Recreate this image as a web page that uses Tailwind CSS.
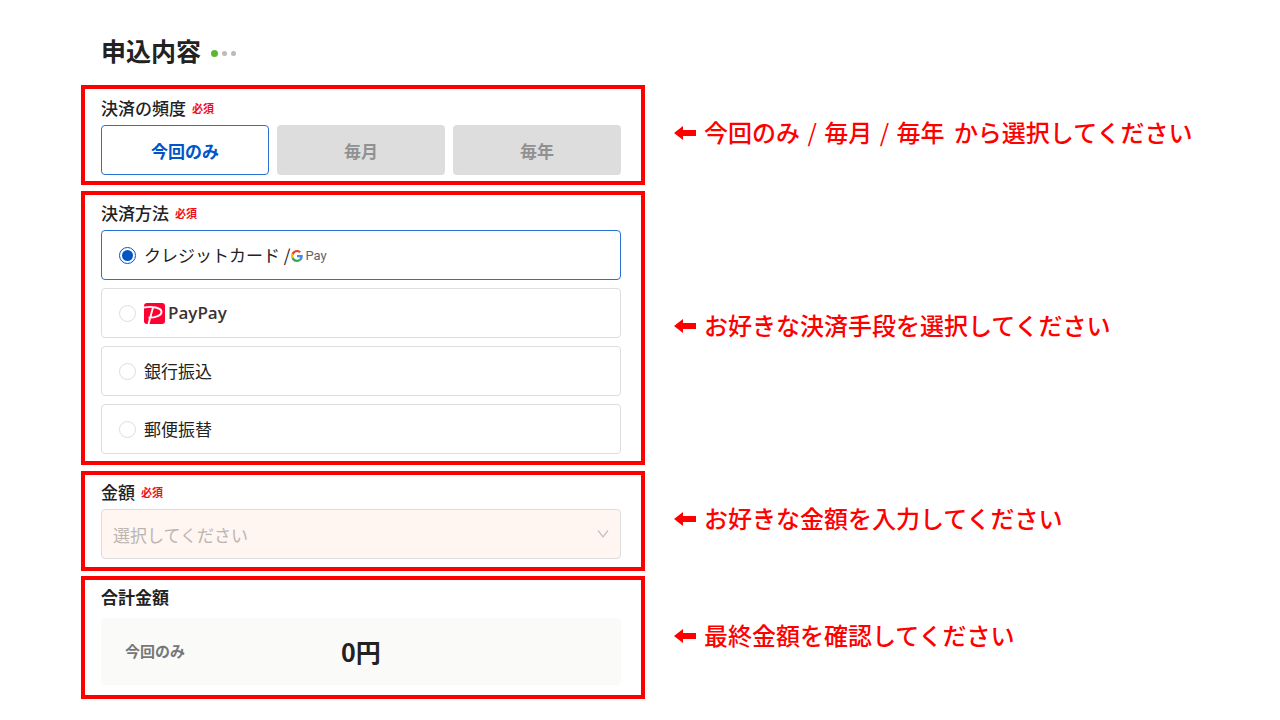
<!DOCTYPE html>
<html lang="ja">
<head>
    <meta charset="UTF-8">
    <meta name="viewport" content="width=device-width, initial-scale=1.0">
    <title>申込内容</title>
    <script src="https://cdn.jsdelivr.net/npm/@tailwindcss/browser@4"></script>
</head>
<body class="bg-white text-[#222] text-[17px] font-['Noto_Sans_CJK_JP',sans-serif]">
    <main class="pl-[81px] pt-[30px]">
        <header class="flex items-center gap-2.5 pl-5 mb-[15px]">
            <h1 class="text-[25px] leading-10 font-bold">申込内容</h1>
            <div class="flex items-center gap-1 pt-1.5">
                <span class="size-[7px] rounded-full bg-[#5cb531]"></span>
                <span class="size-[5px] rounded-full bg-[#bbb]"></span>
                <span class="size-[5px] rounded-full bg-[#bbb]"></span>
            </div>
        </header>

        <form>
            <!-- 決済の頻度 -->
            <div class="grid grid-cols-[564fr_606fr] gap-[29px] items-center">
                <section class="border-4 border-[#f00] pt-0.5 pb-1.5 pl-4 pr-5">
                    <h2 class="flex items-center gap-1.5 leading-[34px] font-medium">決済の頻度 <span class="text-[11px] font-bold text-[#f01020]">必須</span></h2>
                    <div class="grid grid-cols-3 gap-2">
                        <button type="button" class="h-[50px] pt-0.5 rounded-sm border border-[#2a70d0] bg-white text-[#0055c8] font-bold">今回のみ</button>
                        <button type="button" class="h-[50px] pt-0.5 rounded-sm bg-[#ddd] text-[#919191] font-bold">毎月</button>
                        <button type="button" class="h-[50px] pt-0.5 rounded-sm bg-[#ddd] text-[#919191] font-bold">毎年</button>
                    </div>
                </section>
                <p class="flex items-center gap-2 pb-1 text-2xl font-medium text-[#f00]">
                    <svg class="w-[22px] h-[14px] shrink-0" viewBox="0 0 22 14" fill="currentColor"><path d="M0 7 9 0v4h13v6H9v4z"/></svg>
                    <span class="pb-0.5">今回のみ <span class="mx-0.5 font-normal">/</span> 毎月 <span class="mx-0.5 font-normal">/</span> 毎年 <span class="ml-1">から選択してください</span></span>
                </p>
            </div>

            <!-- 決済方法 -->
            <div class="grid grid-cols-[564fr_606fr] gap-[29px] items-center mt-1.5">
                <section class="border-4 border-[#f00] pt-px pb-[7px] pl-4 pr-5">
                    <h2 class="flex items-center gap-1.5 leading-[34px] font-medium">決済方法 <span class="text-[11px] font-bold text-[#f01020]">必須</span></h2>
                    <div class="grid gap-2">
                        <label class="flex items-center gap-2 h-[50px] px-[17px] rounded-sm border border-[#2a70d0]">
                            <input type="radio" name="method" checked class="appearance-none size-[17px] p-[2px] rounded-full border border-[#ddd] bg-clip-content checked:border-[#0055c8] checked:bg-[#0055c8]">
                            <span class="flex items-center gap-px">クレジットカード /
                                <svg class="size-3 mt-0.5" viewBox="0 0 48 48">
                                    <path fill="#EA4335" d="M24 8c3.500 0 6.700 1.200 9.200 3.600l6.900-5.400C35.900 2.400 30.500 0 24 0 14.600 0 6.500 5.400 2.600 13.200l8 7.200C12.400 13.700 17.700 8 24 8z"/>
                                    <path fill="#4285F4" d="M47 24.600c0-1.600-.2-3.100-.4-4.600H24v9h12.900c-.6 3-2.300 5.500-4.800 7.200l7.700 6C44.400 38 47 31.800 47 24.600z"/>
                                    <path fill="#FBBC05" d="M10.500 28.600A14.500 14.500 0 0 1 10.500 19.400l-8-6.200a24 24 0 0 0 0 21.600z"/>
                                    <path fill="#34A853" d="M24 48c6.500 0 11.900-2.100 15.900-5.800l-7.700-6c-2.200 1.500-4.900 2.300-8.200 2.300-6.300 0-11.600-4.200-13.500-9.900l-8 6.200C6.500 42.600 14.600 48 24 48z"/>
                                </svg>
                                <span class="pl-px text-[13px] text-[#5f6368] pt-0.5 font-['Roboto',sans-serif]">Pay</span>
                            </span>
                        </label>
                        <label class="flex items-center gap-2 h-[50px] px-[17px] rounded-sm border border-[#ddd]">
                            <input type="radio" name="method" class="appearance-none size-[17px] p-[2px] rounded-full border border-[#ddd] bg-clip-content checked:border-[#0055c8] checked:bg-[#0055c8]">
                            <span class="flex items-center gap-[3px]">
                                <svg class="size-[21px]" viewBox="0 0 21 21">
                                    <rect width="21" height="21" rx="3" fill="#ff0033"/>
                                    <path d="M0 4.500C8 3 17.500 4.500 17.500 9c0 3.500-5.500 5.800-13 5.800M9 4.500 4.500 21" fill="none" stroke="#fff" stroke-width="1.900"/>
                                </svg>
                                <span class="text-[17px] font-semibold text-[#3a3332] font-['Open_Sans',sans-serif]">PayPay</span>
                            </span>
                        </label>
                        <label class="flex items-center gap-2 h-[50px] px-[17px] rounded-sm border border-[#ddd]">
                            <input type="radio" name="method" class="appearance-none size-[17px] p-[2px] rounded-full border border-[#ddd] bg-clip-content checked:border-[#0055c8] checked:bg-[#0055c8]">
                            銀行振込
                        </label>
                        <label class="flex items-center gap-2 h-[50px] px-[17px] rounded-sm border border-[#ddd]">
                            <input type="radio" name="method" class="appearance-none size-[17px] p-[2px] rounded-full border border-[#ddd] bg-clip-content checked:border-[#0055c8] checked:bg-[#0055c8]">
                            郵便振替
                        </label>
                    </div>
                </section>
                <p class="flex items-center gap-2 pb-1 text-2xl font-medium text-[#f00]">
                    <svg class="w-[22px] h-[14px] shrink-0" viewBox="0 0 22 14" fill="currentColor"><path d="M0 7 9 0v4h13v6H9v4z"/></svg>
                    <span class="pb-0.5">お好きな決済手段を選択してください</span>
                </p>
            </div>

            <!-- 金額 -->
            <div class="grid grid-cols-[564fr_606fr] gap-[29px] items-center mt-1.5">
                <section class="border-4 border-[#f00] pb-2 pl-4 pr-5">
                    <label for="amount" class="flex items-center gap-1.5 leading-[34px] font-medium">金額 <span class="text-[11px] font-bold text-[#f01020]">必須</span></label>
                    <div class="relative">
                        <select id="amount" class="block appearance-none w-full h-[50px] pt-0.5 px-[11px] rounded-sm border border-[#ddd] bg-[#fff5f1] text-[#bbb5b2]">
                            <option>選択してください</option>
                        </select>
                        <svg class="absolute right-3 top-5 w-3 h-2.5 pointer-events-none" viewBox="0 0 12 10" fill="none" stroke="#c8c2c0" stroke-width="1.300"><path d="m1 1.500 5 6.500 5-6.500"/></svg>
                    </div>
                </section>
                <p class="flex items-center gap-2 pb-1 text-2xl font-medium text-[#f00]">
                    <svg class="w-[22px] h-[14px] shrink-0" viewBox="0 0 22 14" fill="currentColor"><path d="M0 7 9 0v4h13v6H9v4z"/></svg>
                    <span class="pb-0.5">お好きな金額を入力してください</span>
                </p>
            </div>

            <!-- 合計金額 -->
            <div class="grid grid-cols-[564fr_606fr] gap-[29px] items-center mt-[5px]">
                <section class="border-4 border-[#f00] pb-2.5 pl-4 pr-5">
                    <h2 class="leading-[34px] font-bold">合計金額</h2>
                    <div class="grid grid-cols-3 items-center mt-1 h-[67px] px-6 rounded-sm bg-[#fafaf9]">
                        <span class="text-[15px] font-bold text-[#777]">今回のみ</span>
                        <span class="text-[25px] font-bold text-center">0円</span>
                    </div>
                </section>
                <p class="flex items-center gap-2 pb-1 text-2xl font-medium text-[#f00]">
                    <svg class="w-[22px] h-[14px] shrink-0" viewBox="0 0 22 14" fill="currentColor"><path d="M0 7 9 0v4h13v6H9v4z"/></svg>
                    <span class="pb-0.5">最終金額を確認してください</span>
                </p>
            </div>
        </form>
    </main>
</body>
</html>
